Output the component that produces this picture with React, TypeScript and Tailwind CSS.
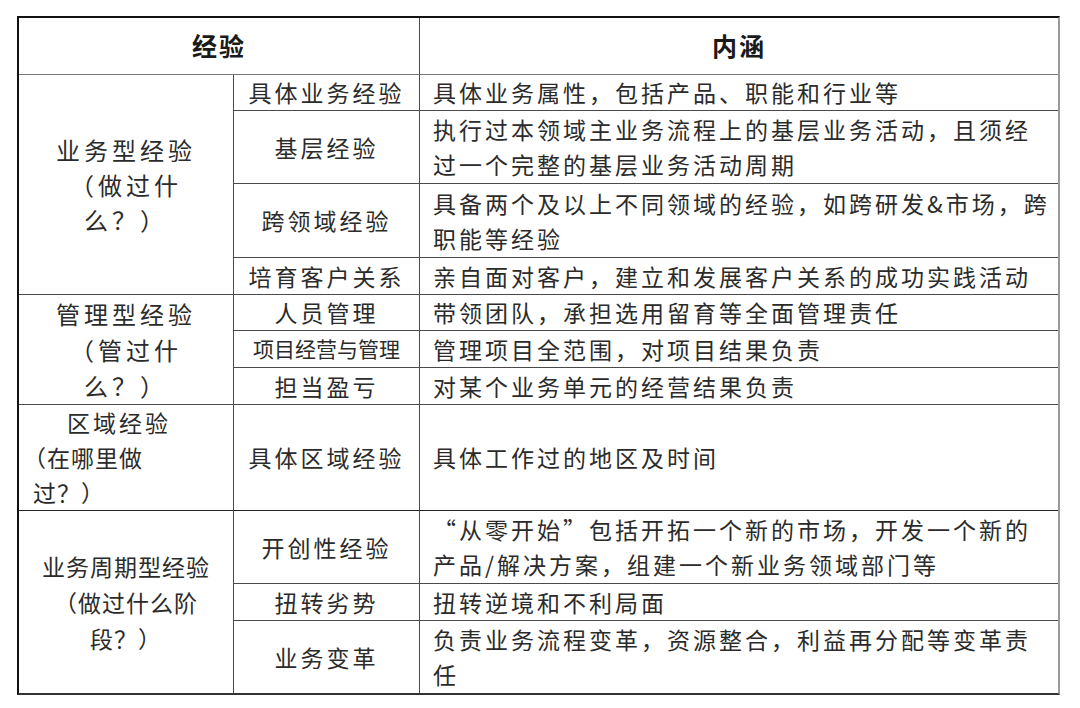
import React from "react";

const font = { fontFamily: '"Noto Sans CJK SC", "Noto Sans", sans-serif' };

function C({ children, className = "" }: { children?: React.ReactNode; className?: string }) {
  return <div className={`flex items-center border-r border-b border-[#4a4a4a] ${className}`}>{children}</div>;
}

export default function App() {
  const body = "text-[23px] tracking-[3px] leading-[35px] text-[#2b2b2b]";
  return (
    <div className="w-[1080px] h-[708px] bg-white pt-[16px] pl-[17px]" style={font}>
      <div
        className="w-[1043px] grid grid-cols-[215px_186px_638px] grid-rows-[57px_36px_73px_74px_37px_36px_37px_37px_106px_73px_37px_72px] border-2 border-t-[#111] border-l-[#111] border-r-[#9a9a9a] border-b-[#333]"
      >
        {/* header */}
        <C className="col-span-2 justify-center border-b-[#777]">
          <span className="text-[25px] font-bold tracking-[2px] text-[#1a1a1a]">经验</span>
        </C>
        <C className="justify-center border-r-0 border-b-[#777]">
          <span className="text-[25px] font-bold tracking-[2px] text-[#1a1a1a]">内涵</span>
        </C>

        {/* group 1 */}
        <C className="row-span-4 flex-col justify-center text-[24px] tracking-[4px] leading-[35px] text-[#2b2b2b]">
          <div>业务型经验</div>
          <div>（做过什</div>
          <div>么？）</div>
        </C>
        <C className={`justify-center ${body}`}>具体业务经验</C>
        <C className={`border-r-0 pl-[13px] ${body}`}>具体业务属性，包括产品、职能和行业等</C>
        <C className={`justify-center ${body}`}>基层经验</C>
        <C className={`border-r-0 pl-[13px] ${body} leading-[34px]`}>
          <div>
            执行过本领域主业务流程上的基层业务活动，且须经
            <br />
            过一个完整的基层业务活动周期
          </div>
        </C>
        <C className={`justify-center ${body}`}>跨领域经验</C>
        <C className={`border-r-0 pl-[13px] ${body} leading-[34px]`}>
          <div>
            具备两个及以上不同领域的经验，如跨研发&amp;市场，跨
            <br />
            职能等经验
          </div>
        </C>
        <C className={`justify-center ${body}`}>培育客户关系</C>
        <C className={`border-r-0 pl-[13px] ${body}`}>亲自面对客户，建立和发展客户关系的成功实践活动</C>

        {/* group 2 */}
        <C className="row-span-3 flex-col justify-center text-[24px] tracking-[4px] leading-[36px] text-[#2b2b2b]">
          <div>管理型经验</div>
          <div>（管过什</div>
          <div>么？）</div>
        </C>
        <C className={`justify-center ${body}`}>人员管理</C>
        <C className={`border-r-0 pl-[13px] ${body}`}>带领团队，承担选用留育等全面管理责任</C>
        <C className="justify-center text-[21px] tracking-[0px] text-[#2b2b2b]">项目经营与管理</C>
        <C className={`border-r-0 pl-[13px] ${body}`}>管理项目全范围，对项目结果负责</C>
        <C className={`justify-center ${body}`}>担当盈亏</C>
        <C className={`border-r-0 pl-[13px] ${body}`}>对某个业务单元的经营结果负责</C>

        {/* group 3 */}
        <C className={`flex-col items-start justify-center pl-[4px] ${body} leading-[34px] border-b-[#222]`}>
          <div className="pl-[44px]">区域经验</div>
          <div className="tracking-[1px]">（在哪里做</div>
          <div className="pl-[10px] tracking-[1px]">过？）</div>
        </C>
        <C className={`justify-center ${body} border-b-[#222]`}>具体区域经验</C>
        <C className={`border-r-0 pl-[13px] ${body} border-b-[#222]`}>具体工作过的地区及时间</C>

        {/* group 4 */}
        <C className="row-span-3 flex-col justify-center border-b-0 text-[23px] tracking-[1px] leading-[36px] text-[#2b2b2b]">
          <div>业务周期型经验</div>
          <div>（做过什么阶</div>
          <div>段？）</div>
        </C>
        <C className={`justify-center ${body}`}>开创性经验</C>
        <C className={`border-r-0 pl-[13px] ${body} leading-[34px]`}>
          <div>
            “从零开始”包括开拓一个新的市场，开发一个新的
            <br />
            产品/解决方案，组建一个新业务领域部门等
          </div>
        </C>
        <C className={`justify-center ${body}`}>扭转劣势</C>
        <C className={`border-r-0 pl-[13px] ${body}`}>扭转逆境和不利局面</C>
        <C className={`justify-center border-b-0 ${body}`}>业务变革</C>
        <C className={`border-r-0 border-b-0 pl-[13px] ${body} leading-[34px]`}>
          <div>
            负责业务流程变革，资源整合，利益再分配等变革责
            <br />
            任
          </div>
        </C>
      </div>
    </div>
  );
}
